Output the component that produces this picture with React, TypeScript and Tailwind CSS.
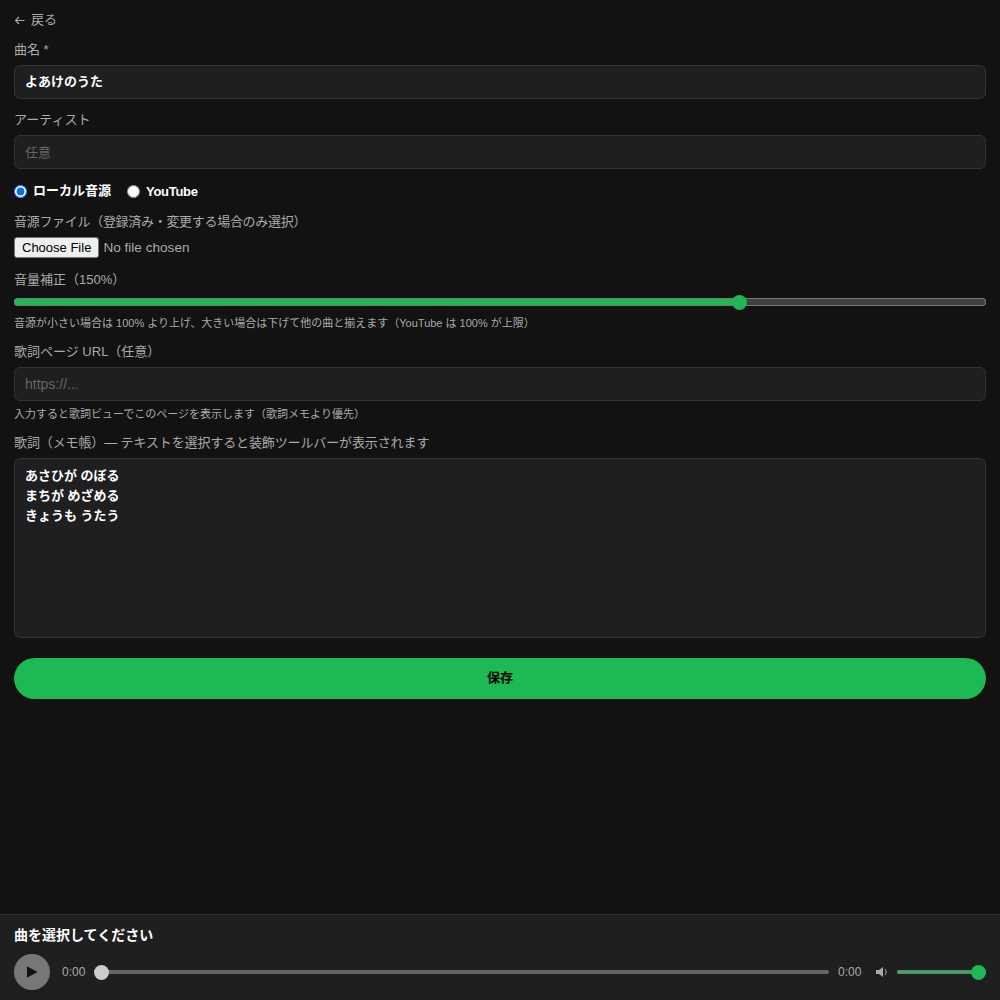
import { useState } from "react";

const labelClass = "block text-[13px] leading-4 text-[#aaaaaa] mb-[7px]";
const inputClass =
  "block w-full h-[34px] rounded-md border border-[#333333] bg-[#1f1f1f] px-[10px] text-[13px] font-semibold text-white outline-none placeholder:font-normal placeholder:text-[#666666]";
const hintClass = "text-[11px] leading-[14px] text-[#aaaaaa]";

const lyrics = "あさひが のぼる\nまちが めざめる\nきょうも うたう";

export default function App() {
  const [title, setTitle] = useState("よあけのうた");
  const [artist, setArtist] = useState("");
  const [source, setSource] = useState("local");
  const [gain, setGain] = useState(150);
  const [url, setUrl] = useState("");
  const [memo, setMemo] = useState(lyrics);
  const [volume, setVolume] = useState(100);

  // 音量補正は 0-200% のスライダー
  const gainPct = gain / 2;

  return (
    <div className="flex h-screen flex-col bg-[#121212] font-['Liberation_Sans','Noto_Sans_CJK_JP',sans-serif] text-white">
      <main className="flex-1 overflow-hidden px-[14px] pt-[10px]">
        <button className="mb-3 ml-px flex h-5 items-center gap-[6px] text-[13px] leading-5 text-[#aaaaaa]">
          <svg width="10" height="9" viewBox="0 0 10 9" fill="none" stroke="#aaaaaa" strokeWidth="1.2">
            <path d="M9.5 4.5H.5M4 1 .5 4.5 4 8" />
          </svg>
          戻る
        </button>

        <div className="mb-[13px]">
          <label className={labelClass}>曲名 *</label>
          <input className={`${inputClass} pb-[3px]`} value={title} onChange={(e) => setTitle(e.target.value)} />
        </div>

        <div className="mb-[14px]">
          <label className={labelClass}>アーティスト</label>
          <input
            className={inputClass}
            placeholder="任意"
            value={artist}
            onChange={(e) => setArtist(e.target.value)}
          />
        </div>

        <div className="mb-[15px] flex h-4 items-center gap-4 text-[13px] font-semibold">
          <label className="flex items-center gap-[6px]">
            <input
              type="radio"
              name="source"
              className="m-0 size-[13px] accent-[#0b6fe8]"
              checked={source === "local"}
              onChange={() => setSource("local")}
            />
            ローカル音源
          </label>
          <label className="flex items-center gap-[6px] pt-px tracking-[-0.3px]">
            <input
              type="radio"
              name="source"
              className="m-0 size-[13px]"
              checked={source === "youtube"}
              onChange={() => setSource("youtube")}
            />
            YouTube
          </label>
        </div>

        <div className="mb-[14px]">
          <label className={`${labelClass} tracking-[-0.3px]`}>音源ファイル（登録済み・変更する場合のみ選択）</label>
          <input
            type="file"
            className="block h-[21px] w-full text-[13.6px] leading-[20px] text-[#aaaaaa] file:mr-[4px] file:h-[21px] file:cursor-default file:rounded-[3px] file:border file:border-[#767676] file:bg-[#efefef] file:px-[7px] file:pb-[2px] file:text-[13px] file:text-black"
          />
        </div>

        <div>
          <label className="mb-[10px] block text-[13px] leading-4 text-[#aaaaaa]">音量補正（{gain}%）</label>
          <input
            type="range"
            min={0}
            max={200}
            value={gain}
            onChange={(e) => setGain(Number(e.target.value))}
            className="block h-2 w-full appearance-none rounded-full shadow-[inset_0_0_0_1px_#777777] outline-none [&::-webkit-slider-thumb]:size-[15px] [&::-webkit-slider-thumb]:appearance-none [&::-webkit-slider-thumb]:rounded-full [&::-webkit-slider-thumb]:bg-[#1db954]"
            style={{
              background: `linear-gradient(to right, #1db954 ${gainPct}%, #404040 ${gainPct}%)`,
            }}
          />
          <p className={`${hintClass} mt-[10px]`}>
            音源が小さい場合は 100% より上げ、大きい場合は下げて他の曲と揃えます（YouTube は 100% が上限）
          </p>
        </div>

        <div className="mb-[14px] pt-[14px]">
          <label className={labelClass}>歌詞ページ URL（任意）</label>
          <input
            className={`${inputClass} placeholder:text-[14px]`}
            placeholder="https://..."
            value={url}
            onChange={(e) => setUrl(e.target.value)}
          />
          <p className={`${hintClass} mt-[6px]`}>入力すると歌詞ビューでこのページを表示します（歌詞メモより優先）</p>
        </div>

        <div className="mb-5">
          <label className={`${labelClass} tracking-[-0.12px]`}>歌詞（メモ帳）— テキストを選択すると装飾ツールバーが表示されます</label>
          <textarea
            className="block h-[180px] w-full resize-none rounded-md border border-[#333333] bg-[#1f1f1f] px-[10px] pb-2 pt-[7px] text-[13px] font-semibold leading-5 text-white outline-none"
            value={memo}
            onChange={(e) => setMemo(e.target.value)}
          />
        </div>

        <button className="block h-[41px] w-full rounded-full bg-[#1db954] pb-[2px] text-[13px] font-bold text-black">
          保存
        </button>
      </main>

      <footer className="h-[86px] shrink-0 border-t border-[#2e2e2e] bg-[#1f1f1f] px-[14px] pt-[12px]">
        <div className="mb-[11px] text-[14px] font-bold leading-4">曲を選択してください</div>
        <div className="flex items-center">
          <button className="flex size-9 shrink-0 items-center justify-center rounded-full bg-[#777777]">
            <span className="block h-3 w-[11px] bg-[#111111] [clip-path:polygon(0_0,100%_50%,0_100%)]" />
          </button>
          <span className="ml-3 w-6 shrink-0 text-[12px] text-[#aaaaaa]">0:00</span>
          <input
            type="range"
            min={0}
            max={100}
            defaultValue={0}
            className="ml-2 block h-1 min-w-0 flex-1 appearance-none rounded-full bg-[#666666] outline-none [&::-webkit-slider-thumb]:size-[15px] [&::-webkit-slider-thumb]:appearance-none [&::-webkit-slider-thumb]:rounded-full [&::-webkit-slider-thumb]:bg-[#cccccc]"
          />
          <span className="ml-[9px] w-6 shrink-0 text-[12px] text-[#aaaaaa]">0:00</span>
          <svg width="12" height="10" viewBox="0 0 12 10" className="ml-[14px] shrink-0">
            <path d="M0 3h3l4-3v10L3 7H0z" fill="#aaaaaa" />
            <path d="M9 2.2a4 4 0 0 1 0 5.6" fill="none" stroke="#aaaaaa" strokeWidth="1" />
          </svg>
          <input
            type="range"
            min={0}
            max={100}
            value={volume}
            onChange={(e) => setVolume(Number(e.target.value))}
            className="ml-[9px] block h-1 w-[89px] shrink-0 appearance-none rounded-full shadow-[inset_0_0_0_1px_#777777] outline-none [&::-webkit-slider-thumb]:size-[15px] [&::-webkit-slider-thumb]:appearance-none [&::-webkit-slider-thumb]:rounded-full [&::-webkit-slider-thumb]:bg-[#1db954]"
            style={{
              background: `linear-gradient(to right, #1db954 ${volume}%, #666666 ${volume}%)`,
            }}
          />
        </div>
      </footer>
    </div>
  );
}
